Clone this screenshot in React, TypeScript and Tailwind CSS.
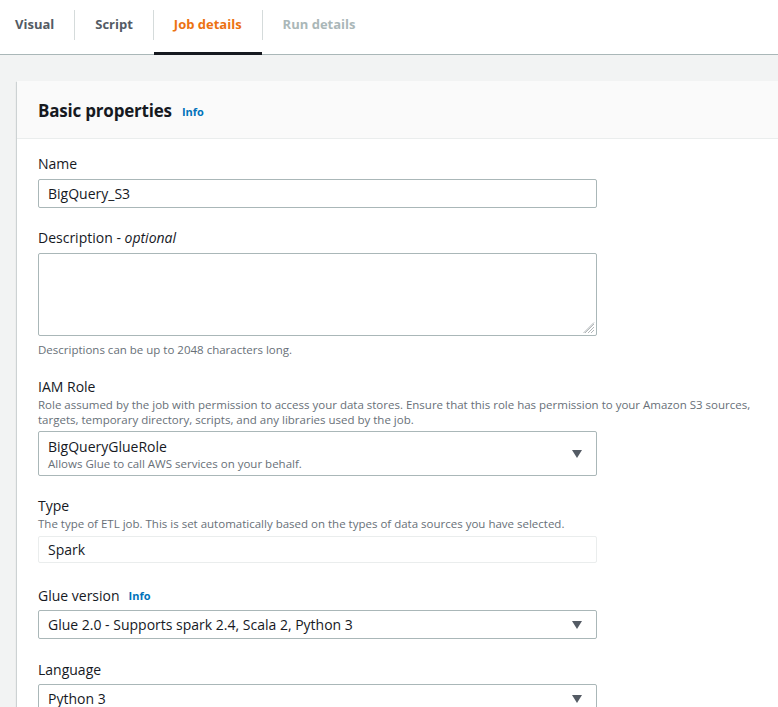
import React from "react"

const font = { fontFamily: '"Open Sans", "Noto Sans", Arial, sans-serif' }

const tabs = [
  { label: "Visual", state: "idle" },
  { label: "Script", state: "idle" },
  { label: "Job details", state: "active" },
  { label: "Run details", state: "disabled" },
]

function Caret() {
  return (
    <svg width="10" height="8" viewBox="0 0 10 8" className="shrink-0">
      <path d="M0 0 H10 L5 8 Z" fill="#545b64" />
    </svg>
  )
}

function Label({ children, className = "" }: { children: React.ReactNode; className?: string }) {
  return <div className={`text-[14px] leading-[20px] text-[#16191f] ${className}`}>{children}</div>
}

function Info({ className = "" }: { className?: string }) {
  return <span className={`text-[11px] font-bold text-[#0073bb] ${className}`}>Info</span>
}

function Select({ value }: { value: string }) {
  return (
    <div className="w-[559px] h-[29px] border border-[#aab7b8] rounded-[2px] bg-white flex items-center justify-between pl-[9px] pr-[14px]">
      <span className="text-[14px] text-[#16191f]">{value}</span>
      <Caret />
    </div>
  )
}

export default function App() {
  return (
    <div className="h-[707px] overflow-hidden bg-[#f2f3f3]" style={font}>
      {/* tabs */}
      <div className="h-[55px] bg-white border-b border-[#aab7b8] flex items-center pl-[15px]">
        {tabs.map((t, i) => (
          <React.Fragment key={t.label}>
            {i > 0 && <div className="w-px h-[30px] bg-[#d5dbdb] -mt-[5px]" />}
            <div
              className={`relative h-full flex items-center text-[13px] font-bold ${i === 0 ? "pr-5" : "px-5"} ${
                t.state === "active" ? "text-[#ec7211]" : t.state === "disabled" ? "text-[#aab7b8]" : "text-[#545b64]"
              }`}
            >
              <span className="-mt-[4px]">{t.label}</span>
              {t.state === "active" && <div className="absolute left-0 right-0 -bottom-px h-[3px] bg-[#16191f]" />}
            </div>
          </React.Fragment>
        ))}
      </div>

      <div className="pl-[17px] pt-[26px]">
        <div className="w-[800px] bg-white shadow-[-1px_1px_1px_0_rgba(0,28,36,0.12),0_1px_1px_0_rgba(0,28,36,0.2)]">
          <div className="h-[58px] bg-[#fafafa] border-b border-[#eaeded] flex items-center gap-[10px] px-[21px] pt-[2px]">
            <h2 className="text-[17px] tracking-[-0.2px] font-bold text-[#16191f]">Basic properties</h2>
            <Info className="mt-[3px]" />
          </div>

          <div className="px-[21px] pt-[15px] pb-10">
            <Label className="mb-[5px]">Name</Label>
            <div className="w-[559px] h-[29px] border border-[#aab7b8] rounded-[2px] flex items-center pl-[9px] text-[14px] text-[#16191f]">
              BigQuery_S3
            </div>

            <Label className="mt-[20px] mb-[5px]">
              Description - <i>optional</i>
            </Label>
            <div className="relative w-[559px] h-[83px]">
              <textarea className="w-full h-full resize-none border border-[#aab7b8] rounded-[2px] outline-none" />
              <svg width="12" height="12" viewBox="0 0 12 12" className="absolute right-[2px] bottom-[2px]">
                <path d="M11 2 L2 11 M11 5 L5 11 M11 8 L8 11 M11 0.5 L0.5 11" stroke="#9ea5a7" strokeWidth="0.8" />
              </svg>
            </div>
            <div className="mt-[6px] text-[11.5px] leading-[16px] text-[#687078]">
              Descriptions can be up to 2048 characters long.
            </div>

            <Label className="mt-[19px]">IAM Role</Label>
            <div className="text-[11.5px] leading-[15px] text-[#687078]">
              Role assumed by the job with permission to access your data stores. Ensure that this role has permission to your Amazon S3 sources,
              <br />
              targets, temporary directory, scripts, and any libraries used by the job.
            </div>
            <div className="mt-[4px] w-[559px] h-[45px] border border-[#aab7b8] rounded-[2px] flex items-center justify-between pl-[9px] pr-[14px]">
              <div>
                <div className="text-[14px] leading-[19px] text-[#16191f]">BigQueryGlueRole</div>
                <div className="text-[11.5px] leading-[15px] text-[#687078]">Allows Glue to call AWS services on your behalf.</div>
              </div>
              <Caret />
            </div>

            <Label className="mt-[20px]">Type</Label>
            <div className="text-[11.5px] leading-[15px] text-[#687078]">
              The type of ETL job. This is set automatically based on the types of data sources you have selected.
            </div>
            <div className="mt-[5px] w-[559px] h-[27px] border border-[#eaeded] rounded-[2px] flex items-center pl-[9px] text-[14px] text-[#16191f]">
              Spark
            </div>

            <Label className="mt-[22px] mb-[4px] flex items-center gap-[9px]">
              Glue version <Info className="mt-[1px]" />
            </Label>
            <Select value="Glue 2.0 - Supports spark 2.4, Scala 2, Python 3" />

            <Label className="mt-[21px] mb-[4px]">Language</Label>
            <Select value="Python 3" />
          </div>
        </div>
      </div>
    </div>
  )
}
